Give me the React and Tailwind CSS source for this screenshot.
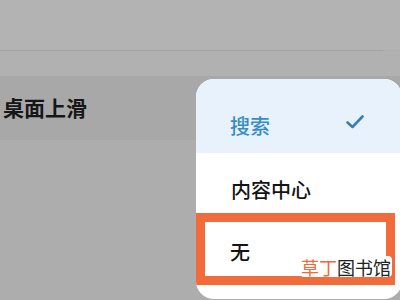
import React from "react";

const FONT = { fontFamily: '"Noto Sans CJK SC", "Noto Sans", sans-serif' };

function Check() {
  return (
    <svg width="18" height="14" viewBox="0 0 18 14" fill="none">
      <path d="M1.5 7.5 L6.5 12 L16.5 1.5" stroke="#3b7fae" strokeWidth="2.6" strokeLinecap="round" strokeLinejoin="round" />
    </svg>
  );
}

export default function App() {
  return (
    <div className="relative w-[400px] h-[300px] overflow-hidden bg-[#adadad]" style={FONT}>
      {/* background settings list */}
      <div className="h-[50px] bg-[#b3b3b3]" />
      <div className="h-px w-[383px] bg-[#a3a3a3]" />
      <div className="h-[25px] bg-[#b1b1b1]" />
      <div className="h-[64px] bg-[#a8a8a8] flex items-center pl-[3px]">
        <span className="text-[21px] font-semibold text-[#161616] leading-none -mt-[2px]">桌面上滑</span>
      </div>

      {/* dropdown menu */}
      <div className="absolute left-[196px] top-[79px] w-[206px] h-[220px] rounded-[18px] bg-white overflow-hidden">
        <div className="h-[74px] bg-[#e8f2fc] flex items-center justify-between pl-[34px] pr-[38px]">
          <span className="text-[20px] font-medium text-[#3a8cc6] leading-none mt-[20px]">搜索</span>
          <span className="mt-[12px]"><Check /></span>
        </div>
        <div className="h-[60px] flex items-center pl-[35px]">
          <span className="text-[20px] font-medium text-[#141414] leading-none mt-[14px]">内容中心</span>
        </div>
        <div className="w-[199px] h-[72px] border-[9px] border-[#f26b3b] flex items-center pl-[25px]">
          <span className="text-[20px] font-medium text-[#141414] leading-none mt-[6px]">无</span>
        </div>
      </div>

      {/* watermark */}
      <div className="absolute left-[300px] top-[256px] bg-white rounded-[4px] px-[1px] flex items-center h-[21px]">
        <span className="text-[18px] leading-none text-[#ef6a36]">草丁</span>
        <span className="text-[18px] leading-none text-[#222]">图书馆</span>
      </div>
    </div>
  );
}
